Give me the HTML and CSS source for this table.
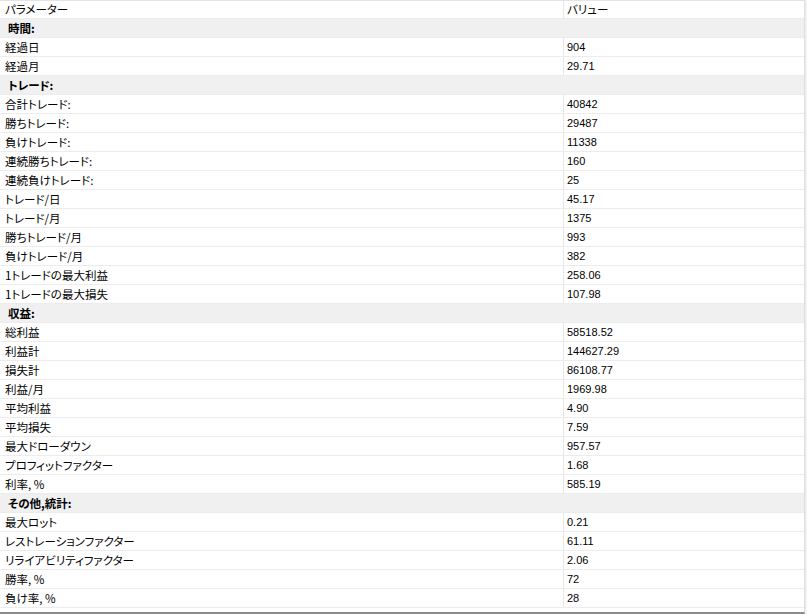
FILE: index.html
```html
<!DOCTYPE html>
<html lang="ja">
<head>
<meta charset="utf-8">
<link rel="stylesheet" href="styles.css">
</head>
<body>
<div class="frame">
  <div class="grid">
    <div class="row head"><div class="k">パラメーター</div><div class="v jp">バリュー</div></div>
    <div class="row sec"><div class="k">時間:</div><div class="v"></div></div>
    <div class="row"><div class="k">経過日</div><div class="v">904</div></div>
    <div class="row"><div class="k">経過月</div><div class="v">29.71</div></div>
    <div class="row sec"><div class="k">トレード:</div><div class="v"></div></div>
    <div class="row"><div class="k">合計トレード:</div><div class="v">40842</div></div>
    <div class="row"><div class="k">勝ちトレード:</div><div class="v">29487</div></div>
    <div class="row"><div class="k">負けトレード:</div><div class="v">11338</div></div>
    <div class="row"><div class="k">連続勝ちトレード:</div><div class="v">160</div></div>
    <div class="row"><div class="k">連続負けトレード:</div><div class="v">25</div></div>
    <div class="row"><div class="k">トレード/日</div><div class="v">45.17</div></div>
    <div class="row"><div class="k">トレード/月</div><div class="v">1375</div></div>
    <div class="row"><div class="k">勝ちトレード/月</div><div class="v">993</div></div>
    <div class="row"><div class="k">負けトレード/月</div><div class="v">382</div></div>
    <div class="row"><div class="k">1トレードの最大利益</div><div class="v">258.06</div></div>
    <div class="row"><div class="k">1トレードの最大損失</div><div class="v">107.98</div></div>
    <div class="row sec"><div class="k">収益:</div><div class="v"></div></div>
    <div class="row"><div class="k">総利益</div><div class="v">58518.52</div></div>
    <div class="row"><div class="k">利益計</div><div class="v">144627.29</div></div>
    <div class="row"><div class="k">損失計</div><div class="v">86108.77</div></div>
    <div class="row"><div class="k">利益/月</div><div class="v">1969.98</div></div>
    <div class="row"><div class="k">平均利益</div><div class="v">4.90</div></div>
    <div class="row"><div class="k">平均損失</div><div class="v">7.59</div></div>
    <div class="row"><div class="k">最大ドローダウン</div><div class="v">957.57</div></div>
    <div class="row"><div class="k">プロフィットファクター</div><div class="v">1.68</div></div>
    <div class="row"><div class="k">利率, %</div><div class="v">585.19</div></div>
    <div class="row sec"><div class="k">その他,統計:</div><div class="v"></div></div>
    <div class="row"><div class="k">最大ロット</div><div class="v">0.21</div></div>
    <div class="row"><div class="k">レストレーションファクター</div><div class="v">61.11</div></div>
    <div class="row"><div class="k">リライアビリティファクター</div><div class="v">2.06</div></div>
    <div class="row"><div class="k">勝率, %</div><div class="v">72</div></div>
    <div class="row"><div class="k">負け率, %</div><div class="v">28</div></div>
  </div>
</div>
</body>
</html>
```

FILE: styles.css
```css
html, body {
  margin: 0;
  padding: 0;
  background: #ffffff;
}
.frame {
  width: 804px;
  height: 611px;
  border-top: 1px solid #e3e3e3;
  border-right: 1px solid #dcdcdc;
  border-bottom: 2px solid #8a8a8a;
  box-shadow: 2px 0 0 #f0f0f0;
  overflow: hidden;
  background: #ffffff;
}
.grid {
  display: flex;
  flex-direction: column;
}
.row {
  display: flex;
  height: 18px;
  border-bottom: 1px solid #ececec;
  color: #000;
}
.row.head {
  height: 17px;
}
.k {
  width: 558px;
  padding-left: 5px;
  border-right: 1px solid #e6e6e6;
  font-family: "Noto Sans CJK JP", "Liberation Sans", sans-serif;
  font-feature-settings: "palt";
  font-size: 11.5px;
  line-height: 18px;
  white-space: nowrap;
}
.v {
  flex: 1;
  padding-left: 3px;
  font-family: "Liberation Sans", Arial, sans-serif;
  font-size: 11px;
  line-height: 18px;
  white-space: nowrap;
}
.v.jp {
  font-family: "Noto Sans CJK JP", sans-serif;
  font-feature-settings: "palt";
  font-size: 11.5px;
}
.head .k, .head .v {
  line-height: 17px;
}
.sec {
  background: #f0f0f0;
}
.sec .k {
  font-weight: bold;
  padding-left: 8px;
  width: 555px;
  border-right-color: #f0f0f0;
}
```
